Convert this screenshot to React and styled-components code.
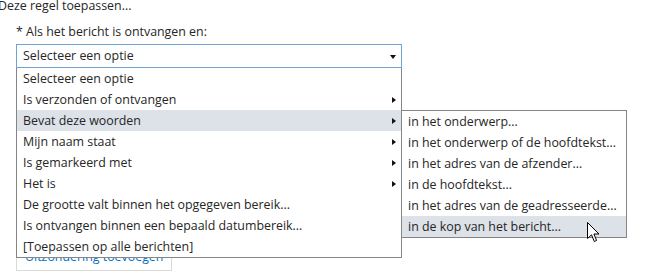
import React from 'react';
import styled, { createGlobalStyle } from 'styled-components';

const GlobalStyle = createGlobalStyle`
  html, body {
    margin: 0;
    padding: 0;
    background: #fff;
    overflow: hidden;
  }
  body {
    font-family: "Open Sans", "Noto Sans", sans-serif;
    font-size: 12.4px;
    color: #262626;
  }
`;

const options = [
  { label: 'Selecteer een optie' },
  { label: 'Is verzonden of ontvangen', sub: true },
  { label: 'Bevat deze woorden', sub: true, active: true },
  { label: 'Mijn naam staat', sub: true },
  { label: 'Is gemarkeerd met', sub: true },
  { label: 'Het is', sub: true },
  { label: 'De grootte valt binnen het opgegeven bereik...' },
  { label: 'Is ontvangen binnen een bepaald datumbereik...' },
  { label: '[Toepassen op alle berichten]' },
];

const subOptions = [
  'in het onderwerp...',
  'in het onderwerp of de hoofdtekst...',
  'in het adres van de afzender...',
  'in de hoofdtekst...',
  'in het adres van de geadresseerde...',
  'in de kop van het bericht...',
];

const App = () => {
  return (
    <Page>
      <GlobalStyle />
      <Title>Deze regel toepassen...</Title>
      <Section>
        <Label>* Als het bericht is ontvangen en:</Label>
        <SelectWrap>
          <Select>
            <span>Selecteer een optie</span>
            <DownArrow />
          </Select>
          <Menu>
            {options.map((o) => (
              <MenuRow key={o.label} active={o.active}>
                <span>{o.label}</span>
                {o.sub && <RightArrow />}
                {o.active && (
                  <SubMenu>
                    {subOptions.map((s, i) => (
                      <SubRow key={s} active={i === subOptions.length - 1}>
                        {s}
                      </SubRow>
                    ))}
                  </SubMenu>
                )}
              </MenuRow>
            ))}
          </Menu>
        </SelectWrap>
        <LinkButton>Uitzondering toevoegen</LinkButton>
      </Section>
      <Cursor width="14" height="22" viewBox="0 0 14 22">
        <path
          d="M0.5 0.5 L0.5 16.5 L4.5 12.8 L7.3 19.5 L9.6 18.5 L6.9 12 L12 12 Z"
          fill="#fff"
          stroke="#000"
          strokeWidth="1"
          strokeLinejoin="miter"
        />
      </Cursor>
    </Page>
  );
};

export default App;

const Page = styled.div`
  position: relative;
  width: 666px;
  height: 273px;
`;

const Title = styled.div`
  margin: -2px 0 0 -2px;
  line-height: 16px;
`;

const Section = styled.div`
  padding-left: 16px;
  width: 386px;
`;

const Label = styled.div`
  margin-top: 10px;
  line-height: 16px;
`;

const SelectWrap = styled.div`
  position: relative;
  margin-top: 4px;
  z-index: 2;
`;

const Select = styled.div`
  display: flex;
  align-items: center;
  justify-content: space-between;
  height: 22px;
  line-height: 22px;
  padding: 0 5px 0 6px;
  border: 1px solid #6ea4d3;
`;

const DownArrow = styled.i`
  width: 0;
  height: 0;
  margin-top: 2px;
  border-left: 3.5px solid transparent;
  border-right: 3.5px solid transparent;
  border-top: 4px solid #111;
`;

const Menu = styled.div`
  position: absolute;
  top: 100%;
  left: 0;
  right: 0;
  background: #fff;
  border: 1px solid #858585;
  border-top: none;
`;

const MenuRow = styled.div`
  position: relative;
  display: flex;
  align-items: center;
  justify-content: space-between;
  height: 21px;
  line-height: 21px;
  padding: 0 5px 0 6px;
  white-space: nowrap;
  background: ${({ active }) => (active ? '#dde1e8' : 'transparent')};
`;

const RightArrow = styled.i`
  width: 0;
  height: 0;
  border-top: 3.5px solid transparent;
  border-bottom: 3.5px solid transparent;
  border-left: 4px solid #111;
`;

const SubMenu = styled.div`
  position: absolute;
  top: 0;
  left: 100%;
  width: 224px;
  background: #fff;
  border: 1px solid #858585;
`;

const SubRow = styled.div`
  height: 21px;
  line-height: 21px;
  padding-left: 6px;
  white-space: nowrap;
  background: ${({ active }) => (active ? '#dde1e8' : 'transparent')};
`;

const LinkButton = styled.div`
  display: inline-block;
  margin-top: 177px;
  padding: 2px 8px 4px 8px;
  line-height: 18px;
  border: 1px solid #dadada;
  color: #0072c6;
`;

const Cursor = styled.svg`
  position: absolute;
  left: 587px;
  top: 224px;
  z-index: 5;
`;
